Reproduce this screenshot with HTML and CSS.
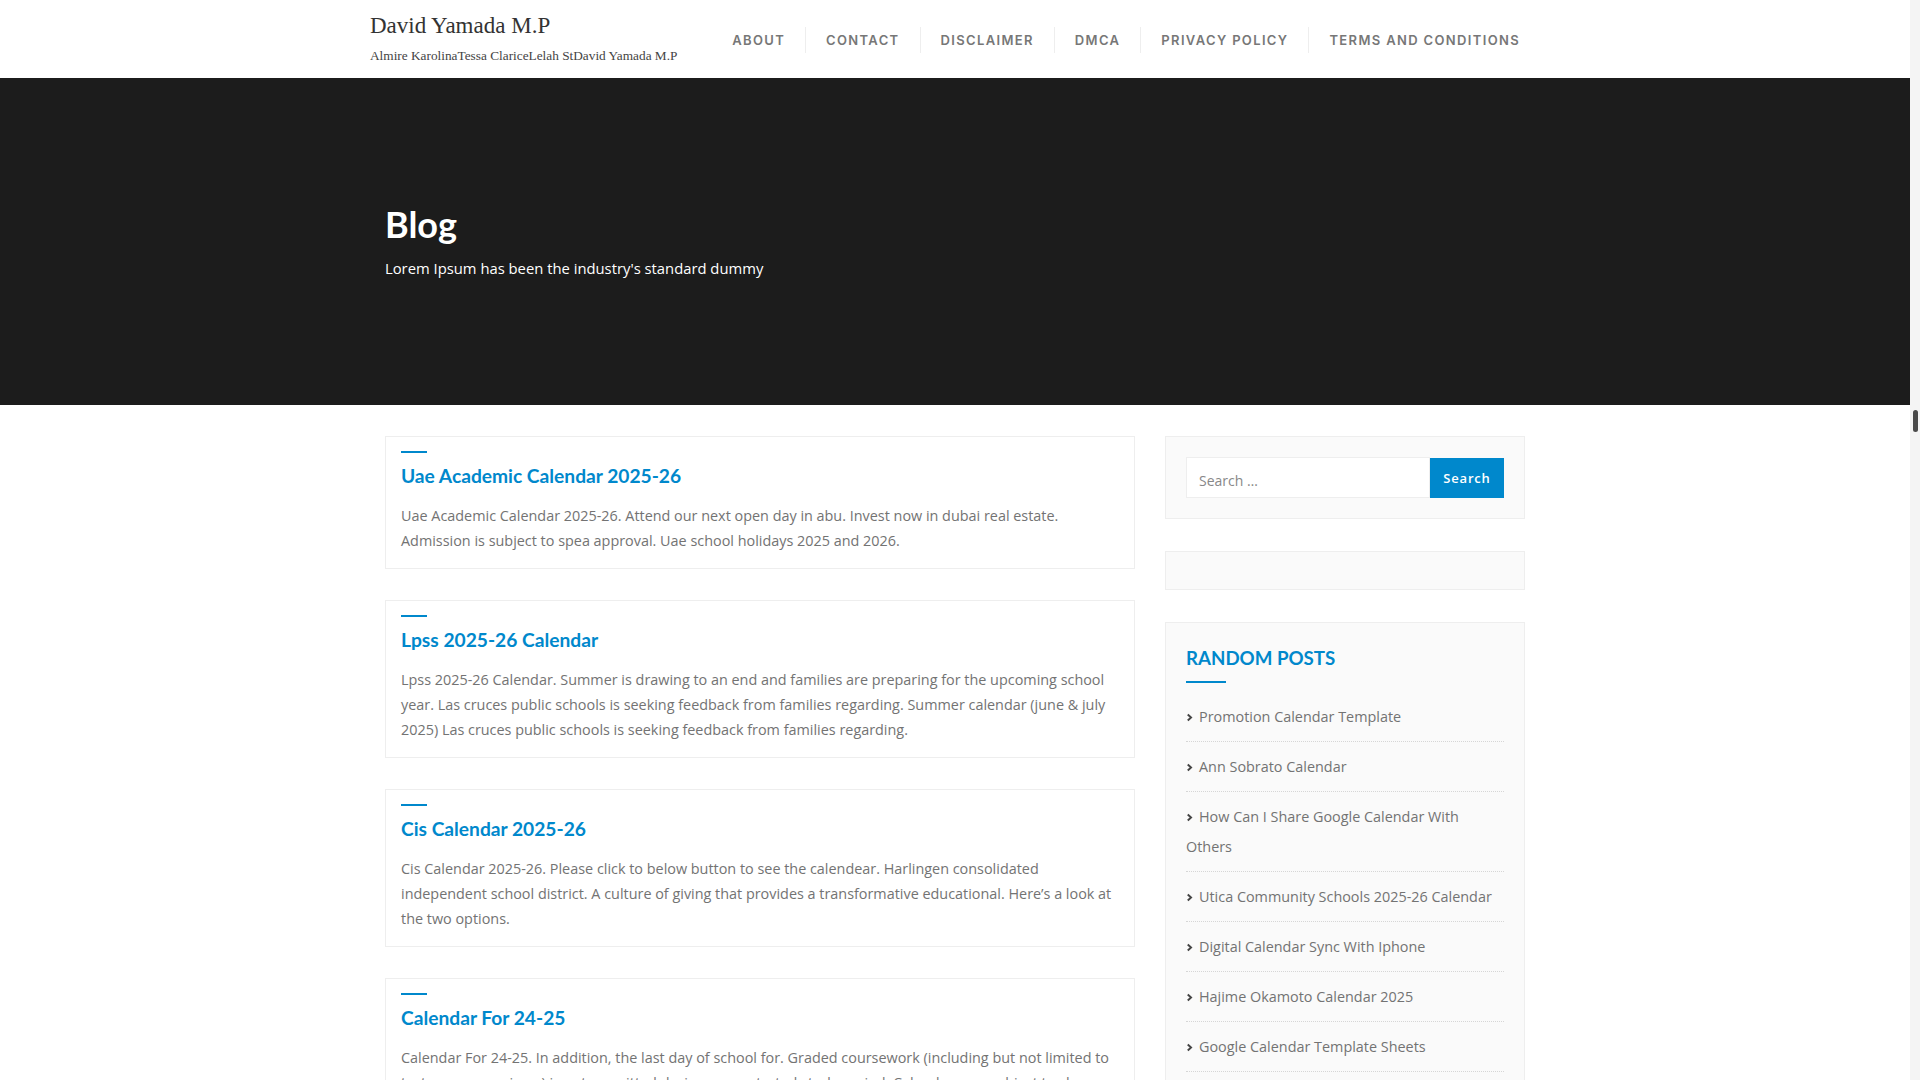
FILE: index.html
```html
<!DOCTYPE html>
<html lang="en">
<head>
<meta charset="utf-8">
<title>Blog - David Yamada M.P</title>
<link rel="stylesheet" href="styles.css">
</head>
<body>
<div class="page">
<header class="site-header">
  <div class="header-inner">
    <div class="brand">
      <div class="site-title">David Yamada M.P</div>
      <div class="site-tagline">Almire KarolinaTessa ClariceLelah StDavid Yamada M.P</div>
    </div>
    <nav class="main-nav">
      <ul class="nav-list">
        <li class="nav-item"><a href="#">About</a></li>
        <li class="nav-item"><a href="#">Contact</a></li>
        <li class="nav-item"><a href="#">Disclaimer</a></li>
        <li class="nav-item"><a href="#">DMCA</a></li>
        <li class="nav-item"><a href="#">Privacy Policy</a></li>
        <li class="nav-item"><a href="#">Terms and Conditions</a></li>
      </ul>
    </nav>
  </div>
</header>

<section class="hero">
  <div class="container">
    <h1 class="hero-title">Blog</h1>
    <p class="hero-sub">Lorem Ipsum has been the industry's standard dummy</p>
  </div>
</section>

<main class="container content">
  <div class="posts">
    <article class="post">
      <span class="post-line"></span>
      <h2 class="post-title"><a href="#">Uae Academic Calendar 2025-26</a></h2>
      <p class="post-text">Uae Academic Calendar 2025-26. Attend our next open day in abu. Invest now in dubai real estate. Admission is subject to spea approval. Uae school holidays 2025 and 2026.</p>
    </article>
    <article class="post">
      <span class="post-line"></span>
      <h2 class="post-title"><a href="#">Lpss 2025-26 Calendar</a></h2>
      <p class="post-text">Lpss 2025-26 Calendar. Summer is drawing to an end and families are preparing for the upcoming school year. Las cruces public schools is seeking feedback from families regarding. Summer calendar (june &amp; july 2025) Las cruces public schools is seeking feedback from families regarding.</p>
    </article>
    <article class="post">
      <span class="post-line"></span>
      <h2 class="post-title"><a href="#">Cis Calendar 2025-26</a></h2>
      <p class="post-text">Cis Calendar 2025-26. Please click to below button to see the calendear. Harlingen consolidated independent school district. A culture of giving that provides a transformative educational. Here’s a look at the two options.</p>
    </article>
    <article class="post">
      <span class="post-line"></span>
      <h2 class="post-title"><a href="#">Calendar For 24-25</a></h2>
      <p class="post-text">Calendar For 24-25. In addition, the last day of school for. Graded coursework (including but not limited to tests, exams, quizzes) is not permitted during concentrated study period. Calendars are subject to change.</p>
    </article>
  </div>

  <aside class="sidebar">
    <div class="widget widget-search">
      <form class="search-form" action="#">
        <input class="search-field" type="search" placeholder="Search …">
        <button class="search-submit" type="button">Search</button>
      </form>
    </div>
    <div class="widget widget-empty"></div>
    <div class="widget widget-posts">
      <h3 class="widget-title">Random Posts</h3>
      <ul class="post-list">
        <li class="post-list-item"><svg class="chev" viewBox="0 0 8 10" width="7" height="9"><path d="M2 1.5 L5.8 5 L2 8.5" fill="none" stroke="#444" stroke-width="2.2"/></svg><a href="#">Promotion Calendar Template</a></li>
        <li class="post-list-item"><svg class="chev" viewBox="0 0 8 10" width="7" height="9"><path d="M2 1.5 L5.8 5 L2 8.5" fill="none" stroke="#444" stroke-width="2.2"/></svg><a href="#">Ann Sobrato Calendar</a></li>
        <li class="post-list-item"><svg class="chev" viewBox="0 0 8 10" width="7" height="9"><path d="M2 1.5 L5.8 5 L2 8.5" fill="none" stroke="#444" stroke-width="2.2"/></svg><a href="#">How Can I Share Google Calendar With Others</a></li>
        <li class="post-list-item"><svg class="chev" viewBox="0 0 8 10" width="7" height="9"><path d="M2 1.5 L5.8 5 L2 8.5" fill="none" stroke="#444" stroke-width="2.2"/></svg><a href="#">Utica Community Schools 2025-26 Calendar</a></li>
        <li class="post-list-item"><svg class="chev" viewBox="0 0 8 10" width="7" height="9"><path d="M2 1.5 L5.8 5 L2 8.5" fill="none" stroke="#444" stroke-width="2.2"/></svg><a href="#">Digital Calendar Sync With Iphone</a></li>
        <li class="post-list-item"><svg class="chev" viewBox="0 0 8 10" width="7" height="9"><path d="M2 1.5 L5.8 5 L2 8.5" fill="none" stroke="#444" stroke-width="2.2"/></svg><a href="#">Hajime Okamoto Calendar 2025</a></li>
        <li class="post-list-item"><svg class="chev" viewBox="0 0 8 10" width="7" height="9"><path d="M2 1.5 L5.8 5 L2 8.5" fill="none" stroke="#444" stroke-width="2.2"/></svg><a href="#">Google Calendar Template Sheets</a></li>
        <li class="post-list-item"><svg class="chev" viewBox="0 0 8 10" width="7" height="9"><path d="M2 1.5 L5.8 5 L2 8.5" fill="none" stroke="#444" stroke-width="2.2"/></svg><a href="#">Printable Calendar 2025 Monthly</a></li>
      </ul>
    </div>
  </aside>
</main>
</div>
<div class="fake-scrollbar"><div class="fake-thumb"></div></div>
</body>
</html>
```

FILE: styles.css
```css
* { box-sizing: border-box; }
html, body { margin: 0; padding: 0; }
body {
  background: #fff;
  font-family: "Open Sans", "Liberation Sans", sans-serif;
  font-size: 14px;
  color: #777;
}
a { text-decoration: none; color: inherit; }
ul { list-style: none; margin: 0; padding: 0; }

.page { margin-right: 10px; }

/* emulated browser scrollbar */
.fake-scrollbar {
  position: fixed;
  top: 0;
  right: 0;
  width: 10px;
  height: 100%;
  background: #f4f4f4;
}
.fake-thumb {
  position: absolute;
  top: 410px;
  left: 3px;
  width: 5px;
  height: 22px;
  border-radius: 3px;
  background: #4a4a4a;
}

/* Header */
.site-header {
  height: 78px;
  background: #fff;
}
.header-inner {
  width: 1170px;
  margin: 0 auto;
  padding-left: 0;
  display: flex;
  align-items: flex-start;
  justify-content: space-between;
}
.brand { padding-top: 12px; }
.site-title {
  font-family: "Liberation Serif", serif;
  font-size: 23px;
  line-height: 27px;
  color: #333;
}
.site-tagline {
  font-family: "Liberation Serif", serif;
  font-size: 13.3px;
  line-height: 18px;
  color: #444;
  margin-top: 8px;
}
.main-nav { padding-top: 27px; }
.nav-list { display: flex; }
.nav-item { border-left: 1px solid #eee; }
.nav-item:first-child { border-left: none; }
.nav-item a {
  display: block;
  padding: 0 20px;
  height: 26px;
  line-height: 26px;
  font-family: "Inter", "Liberation Sans", sans-serif;
  font-weight: 600;
  font-size: 13px;
  letter-spacing: 1.35px;
  text-transform: uppercase;
  color: #777;
}

/* Hero */
.hero {
  background: #1c1c1c;
  height: 327px;
  padding-top: 125px;
}
.container {
  width: 1170px;
  margin: 0 auto;
  padding: 0 15px;
}
.hero-title {
  margin: 0;
  font-family: "Lato", sans-serif;
  font-weight: 700;
  font-size: 36px;
  line-height: 42px;
  color: #fff;
}
.hero-sub {
  margin: 12px 0 0;
  font-family: "Open Sans", sans-serif;
  font-size: 14.8px;
  line-height: 22px;
  color: #fff;
}

/* Content */
.content {
  display: flex;
  gap: 30px;
  padding-top: 31px;
}
.posts { width: 750px; flex: none; }
.post {
  border: 1px solid #eee;
  background: #fff;
  padding: 14px 15px 15px;
  margin-bottom: 31px;
}
.post-line {
  display: block;
  width: 26px;
  height: 2px;
  background: #0088cc;
}
.post-title {
  margin: 11px 0 0;
  font-family: "Lato", sans-serif;
  font-weight: 700;
  font-size: 19.2px;
  line-height: 24px;
  color: #0088cc;
}
.post-text {
  margin: 15px 0 0;
  font-size: 14.4px;
  line-height: 25px;
  color: #737373;
}

/* Sidebar */
.sidebar { width: 360px; flex: none; }
.widget {
  background: #fafafa;
  border: 1px solid #eee;
  padding: 20px;
  margin-bottom: 32px;
}
.search-form { display: flex; height: 41px; }
.search-field {
  flex: 1;
  min-width: 0;
  height: 41px;
  border: 1px solid #eee;
  background: #fff;
  padding: 6px 12px 0;
  font-family: "Open Sans", sans-serif;
  font-size: 14px;
  color: #555;
  outline: none;
}
.search-field::placeholder { color: #888; }
.search-submit {
  width: 74px;
  height: 40px;
  margin-top: 1px;
  border: none;
  background: #0088cc;
  color: #fff;
  font-family: "Open Sans", sans-serif;
  font-weight: 600;
  font-size: 13px;
  letter-spacing: 0.8px;
  padding: 0;
}
.widget-empty { height: 39px; padding: 0; }
.widget-title {
  margin: 0;
  font-family: "Lato", sans-serif;
  font-weight: 700;
  font-size: 18.7px;
  line-height: 30px;
  text-transform: uppercase;
  color: #0088cc;
}
.widget-title::after {
  content: "";
  display: block;
  width: 40px;
  height: 2px;
  margin-top: 8px;
  background: #0088cc;
}
.post-list { margin-top: 9px; }
.post-list-item {
  padding: 10px 0 9px;
  line-height: 30px;
  border-bottom: 1px dotted #d6d6d6;
  font-size: 14.4px;
  color: #737373;
}
.chev { margin-right: 6px; vertical-align: 0; }
```
